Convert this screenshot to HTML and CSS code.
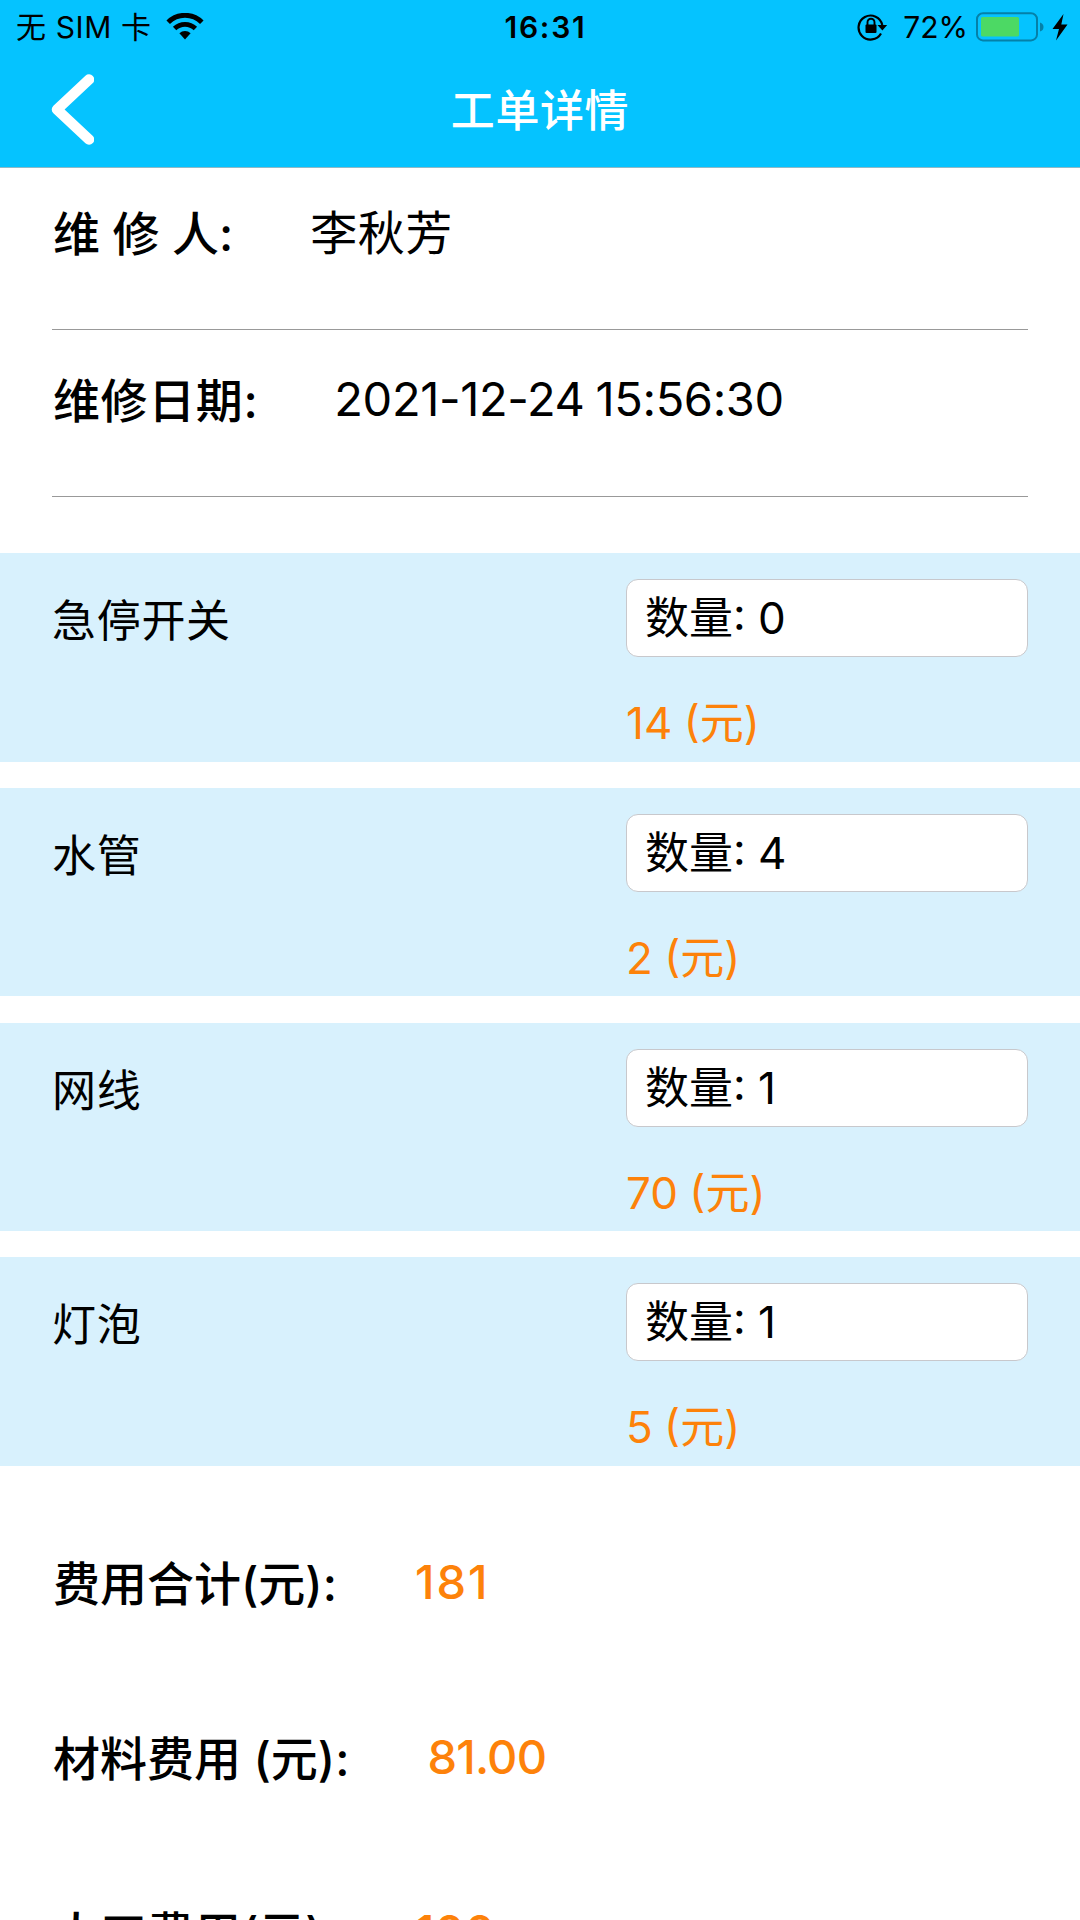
FILE: index.html
```html
<!DOCTYPE html>
<html lang="zh-CN">
  <head>
    <meta charset="UTF-8" />
    <title>工单详情</title>
    <meta name="viewport" content="width=device-width, initial-scale=1" />
    <link rel="stylesheet" href="styles.css">
  </head>
  <body>
    <header class="header">
      <div class="status-bar">
        <div class="status-left">
          <span>无 SIM 卡</span>
          <svg class="wifi" width="38" height="28" viewBox="0 0 38 28">
            <path d="M2.2 9.2 A24 24 0 0 1 35.8 9.2" fill="none" stroke="#000" stroke-width="5" />
            <path d="M8.6 15.6 A15 15 0 0 1 29.4 15.6" fill="none" stroke="#000" stroke-width="4.8" />
            <path d="M13.4 20.2 A8.4 8.4 0 0 1 24.6 20.2 L19 26.4 Z" />
          </svg>
        </div>
        <div class="status-time">16:31</div>
        <div class="status-right">
          <svg class="lock" width="32" height="28" viewBox="0 0 32 28">
            <path d="M24 20.5 A12 12 0 1 1 25.3 12" fill="none" stroke="#000" stroke-width="2.2" />
            <path d="M20.5 12 H30.2 L25.4 17.6 Z" />
            <rect x="8.5" y="11.5" width="11" height="8.5" rx="1" />
            <path d="M10.5 12.5 V9.2 A3.5 3.5 0 0 1 17.5 9.2 V12.5" fill="none" stroke="#000" stroke-width="1.9" />
          </svg>
          <span class="percent">72%</span>
          <svg class="battery" width="68" height="30" viewBox="0 0 68 30">
            <rect x="1" y="1.2" width="60" height="27.2" rx="6" fill="none" stroke="#0580a8" stroke-width="2" />
            <path d="M64 10.5 Q67.5 11.5 67.5 15 Q67.5 18.5 64 19.5 Z" fill="#0580a8" />
            <rect x="5" y="5" width="38" height="19.5" rx="1.5" fill="#4cd964" />
          </svg>
          <svg class="bolt" width="16" height="27" viewBox="0 0 16 27">
            <path d="M11.5 0 L0.5 15 H7 L4 26.5 L15.5 10.5 H9.3 Z" />
          </svg>
        </div>
      </div>
      <div class="nav-bar">
        <svg class="back" width="44" height="72" viewBox="0 0 44 72">
          <path d="M39 5.5 L7 35.5 L39 65.5" fill="none" stroke="#fff" stroke-width="10.5" stroke-linecap="round" stroke-linejoin="round" />
        </svg>
        <h1 class="title">工单详情</h1>
      </div>
    </header>

    <section class="info">
      <div class="info-row">
        <span class="label">维 修 人:</span>
        <span class="value name">李秋芳</span>
      </div>
      <div class="info-row">
        <span class="label label-date">维修日期:</span>
        <span class="value date">2021-12-24 15:56:30</span>
      </div>
    </section>

    <section class="items">
      <div class="item">
        <div class="item-name">急停开关</div>
        <div class="item-detail">
          <div class="quantity">数量: 0</div>
          <div class="price">14 (元)</div>
        </div>
      </div>
      <div class="item">
        <div class="item-name">水管</div>
        <div class="item-detail">
          <div class="quantity">数量: 4</div>
          <div class="price">2 (元)</div>
        </div>
      </div>
      <div class="item">
        <div class="item-name">网线</div>
        <div class="item-detail">
          <div class="quantity">数量: 1</div>
          <div class="price">70 (元)</div>
        </div>
      </div>
      <div class="item">
        <div class="item-name">灯泡</div>
        <div class="item-detail">
          <div class="quantity">数量: 1</div>
          <div class="price">5 (元)</div>
        </div>
      </div>
    </section>

    <section class="fees">
      <div class="fee-row">
        <span class="label">费用合计(元):</span>
        <span class="amount amount-total">181</span>
      </div>
      <div class="fee-row">
        <span class="label">材料费用 (元):</span>
        <span class="amount amount-material">81.00</span>
      </div>
      <div class="fee-row">
        <span class="label">人工费用(元):</span>
        <span class="amount">100</span>
      </div>
    </section>
  </body>
</html>
```

FILE: styles.css
```css
* {
  box-sizing: border-box;
}

body {
  margin: 0;
  height: 1920px;
  overflow: hidden;
  background-color: #fff;
  color: #000;
  font-family: Inter, "Noto Sans CJK SC", sans-serif;
  font-size: 44px;
}

/* Header styles */
.header {
  height: 168px;
  border-bottom: 1px solid #8fb9c6;
  background-color: #05c3ff;
}

.status-bar {
  display: grid;
  grid-template-columns: 1fr auto 1fr;
  align-items: center;
  height: 54px;
  padding: 0 12px 0 16px;
  font-size: 30px;
  line-height: 54px;
}

.status-left,
.status-right {
  display: flex;
  align-items: center;
}

.status-left {
  gap: 15px;
  letter-spacing: 0.6px;
}

.status-right {
  justify-content: flex-end;
}

.status-time {
  padding-left: 7px;
  font-weight: 600;
  letter-spacing: 1.8px;
}

.percent {
  margin: 0 8px 0 14px;
}

.bolt {
  margin-left: 8px;
}

.nav-bar {
  display: grid;
  grid-template-columns: 1fr auto 1fr;
  align-items: center;
  height: 111px;
  padding: 0 50px;
}

.title {
  margin: 0;
  padding-top: 2px;
  color: #fff;
  font-size: 44px;
  font-weight: 500;
  letter-spacing: 0.6px;
  line-height: 60px;
}

/* Repair info styles */
.info {
  padding: 0 52px;
}

.info-row {
  display: flex;
  align-items: center;
  height: 167px;
  padding-bottom: 29px;
  border-bottom: 1px solid #999;
}

.info-row:first-child {
  height: 162px;
  padding-bottom: 34px;
}

.label {
  padding: 0 0 3px 1px;
  font-size: 47px;
  font-weight: 500;
  white-space: pre;
}

.label-date {
  letter-spacing: 0.6px;
}

.value {
  margin-left: 77px;
  font-size: 47px;
}

.name {
  padding-bottom: 4px;
  letter-spacing: 0.5px;
}

.date {
  margin-left: 76px;
  padding-bottom: 1px;
  letter-spacing: -0.35px;
  word-spacing: -2px;
}

/* Item list styles */
.items {
  display: flex;
  flex-direction: column;
  gap: 26.3px;
  margin-top: 56px;
}

.item {
  display: flex;
  justify-content: space-between;
  height: 208.5px;
  padding: 26px 52px 0;
  background-color: #d8f1fd;
}

.item-name {
  padding-top: 3px;
  letter-spacing: 0.7px;
  line-height: 78px;
}

.item-detail {
  width: 402px;
}

.quantity {
  height: 78px;
  padding-left: 18px;
  border: 1px solid #c8c8cc;
  border-radius: 12px;
  background-color: #fff;
  line-height: 76px;
}

.price {
  margin-top: 36px;
  color: #fd820a;
  line-height: 60px;
  word-spacing: -1px;
}

/* Fee styles */
.fees {
  padding: 29px 52px 0;
}

.fee-row {
  display: flex;
  align-items: center;
  height: 175px;
}

.amount {
  margin-left: 78px;
  padding-bottom: 1px;
  color: #fd820a;
  font-size: 47px;
  font-weight: 500;
}

.amount-total {
  letter-spacing: 2px;
}

.amount-material {
  letter-spacing: -0.8px;
}
```
